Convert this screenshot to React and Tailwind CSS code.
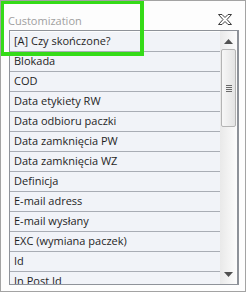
const FIELDS = [
  '[A] Czy skończone?',
  'Blokada',
  'COD',
  'Data etykiety RW',
  'Data odbioru paczki',
  'Data zamknięcia PW',
  'Data zamknięcia WZ',
  'Definicja',
  'E-mail adress',
  'E-mail wysłany',
  'EXC (wymiana paczek)',
  'Id',
  'In Post Id',
];

export default function App() {
  return (
    <div className="relative h-[292px] w-[246px] overflow-hidden border border-[#a3a3a3] bg-[#fdfdfd] font-['Open_Sans',sans-serif] text-[11px]">
      {/* Header */}
      <div className="flex h-[29px] justify-between pl-[7px] pr-[13px] pt-[12px]">
        <span className="leading-[15px] text-[#a0a0a0]">Customization</span>
        <svg className="mt-[1px]" width="14" height="11" viewBox="0 0 14 11">
          <polygon
            points="0.5,0.5 4,0.5 7,3.5 10,0.5 13.5,0.5 9,5.5 13.5,10.5 10,10.5 7,7.5 4,10.5 0.5,10.5 5,5.5"
            fill="#fff"
            stroke="#3c3c3c"
            strokeWidth="1"
            strokeLinejoin="round"
          />
        </svg>
      </div>

      {/* List */}
      <div className="ml-[8px] flex h-[255px] w-[230px] overflow-hidden border border-[#8e9299] border-r-2">
        <div className="flex-1 overflow-hidden pt-px">
          {FIELDS.map(f => (
            <div key={f} className="flex h-[20px] items-center border-b border-[#a9adb5] bg-[#f1f3f8] pl-[4px] text-[#1f1f1f]">
              {f}
            </div>
          ))}
        </div>
        <ScrollBar />
      </div>

      {/* Highlight */}
      <div className="pointer-events-none absolute left-[-1px] top-[-1px] h-[56px] w-[144px] border-4 border-[#35db18]" />
    </div>
  );
}

function ScrollBar() {
  return (
    <div className="flex w-[17px] flex-col items-center bg-gradient-to-r from-[#e9e9e9] to-[#fcfcfc]">
      <svg className="mt-[8px]" width="9" height="5" viewBox="0 0 9 5">
        <polygon points="0,5 4.5,0 9,5" fill="#505050" />
      </svg>
      <div className="mt-[5px] flex h-[78px] w-[15px] flex-col items-center justify-center gap-[1px] rounded-[2px] border border-[#b4b4b4] bg-gradient-to-r from-[#f7f7f7] to-[#e4e4e4]">
        <div className="h-px w-[6px] bg-[#6a6a6a]" />
        <div className="h-px w-[6px] bg-[#6a6a6a]" />
        <div className="h-px w-[6px] bg-[#6a6a6a]" />
        <div className="h-px w-[6px] bg-[#6a6a6a]" />
      </div>
      <div className="flex-1" />
      <svg className="mb-[7px]" width="9" height="5" viewBox="0 0 9 5">
        <polygon points="0,0 4.5,5 9,0" fill="#505050" />
      </svg>
    </div>
  );
}
